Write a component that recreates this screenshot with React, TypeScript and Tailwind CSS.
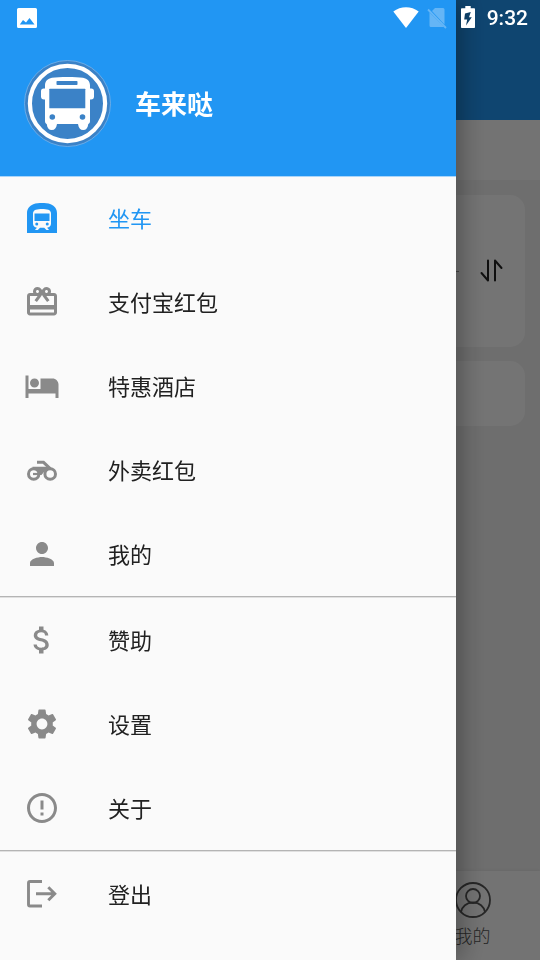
import { useState, type ReactNode } from "react";
import {
  MdAttachMoney,
  MdErrorOutline,
  MdHotel,
  MdPerson,
  MdRedeem,
  MdSettings,
  MdSubway,
} from "react-icons/md";

type Item = { id: string; label: string; icon: ReactNode };

const mainItems: Item[] = [
  { id: "ride", label: "坐车", icon: <MdSubway size={36} /> },
  { id: "alipay", label: "支付宝红包", icon: <MdRedeem size={36} /> },
  { id: "hotel", label: "特惠酒店", icon: <MdHotel size={36} /> },
  { id: "takeout", label: "外卖红包", icon: <MotorcycleIcon /> },
  { id: "me", label: "我的", icon: <MdPerson size={36} /> },
];

const moreItems: Item[] = [
  { id: "sponsor", label: "赞助", icon: <MdAttachMoney size={36} /> },
  { id: "settings", label: "设置", icon: <MdSettings size={36} /> },
  { id: "about", label: "关于", icon: <MdErrorOutline size={36} /> },
];

const logoutItem: Item = { id: "logout", label: "登出", icon: <LogoutIcon /> };

function MotorcycleIcon() {
  return (
    <svg width="36" height="36" viewBox="0 0 36 36" fill="none" stroke="currentColor" aria-hidden="true">
      <circle cx="9.7" cy="22" r="5.2" strokeWidth="3" />
      <circle cx="26.200" cy="22" r="5.300" strokeWidth="3" />
      <path strokeWidth="3" d="M13 10.300h6.500l7 6.500" />
      <path strokeWidth="2.200" d="M9 22h6" />
      <path fill="currentColor" stroke="none" d="M8.500 14.800h16l1.500 2-6 3.200-2.500 3h-2.700c-.3-4-2.800-5.500-6.300-5.500z" />
    </svg>
  );
}

function LogoutIcon() {
  return (
    <svg width="36" height="36" viewBox="0 0 36 36" fill="none" stroke="currentColor" strokeWidth="2.9" aria-hidden="true">
      <path d="M18 5.500H6a1.500 1.500 0 0 0-1.500 1.500v21.500a1.500 1.500 0 0 0 1.500 1.500H18M12 17.700h19M24.300 11.200l6.500 6.500-6.500 6.500" />
    </svg>
  );
}

function BusLogo() {
  return (
    <svg width="87" height="87" viewBox="0 0 87 87" className="shrink-0" aria-hidden="true">
      <circle cx="43.5" cy="43.5" r="43" fill="#3b82c7" stroke="#79b4ea" strokeWidth=".8" />
      <circle cx="43.5" cy="43.5" r="37.600" fill="none" stroke="#fff" strokeWidth="4.200" />
      <path
        fill="#fff"
        d="M28 17.800c7-1 24-1 31 0 4.500.8 6.800 3.500 7 7.500v3.200h1.200a2.800 2.800 0 0 1 2.800 2.800v5.200a3 3 0 0 1-3 3h-1V61c0 1.500-.6 2.500-1.800 3.200-.4 3.800-2 5.800-5 5.800s-4.500-2-5.200-6H33c-.7 4-2.200 6-5.200 6s-4.600-2-5-5.800c-1.200-.7-1.800-1.700-1.800-3.200V39.500h-1a3 3 0 0 1-3-3v-5.200a2.800 2.800 0 0 1 2.800-2.800H21v-3.200c.2-4 2.500-6.700 7-7.500z"
      />
      <rect x="32.500" y="21" width="21" height="4" rx=".8" fill="#3b82c7" />
      <rect x="25.300" y="28.800" width="36" height="19.500" rx=".5" fill="#3b82c7" />
      <circle cx="28.300" cy="57" r="2.800" fill="#3b82c7" />
      <circle cx="58.500" cy="57" r="2.800" fill="#3b82c7" />
    </svg>
  );
}

function StatusBar() {
  return (
    <div className="pointer-events-none fixed inset-x-0 top-0 z-30 flex h-9 items-center justify-between pr-3 pl-4 text-white">
      <svg width="22" height="22" viewBox="0 0 22 22" aria-hidden="true">
        <path
          fill="currentColor"
          fillRule="evenodd"
          d="M2.500 1h17A1.500 1.500 0 0 1 21 2.500v17a1.500 1.500 0 0 1-1.500 1.500h-17A1.500 1.500 0 0 1 1 19.500v-17A1.500 1.500 0 0 1 2.500 1zM3.800 17.500h14.700l-5-6.500-3.500 4.500-3-2.500z"
        />
      </svg>
      <div className="flex items-center">
        <svg width="26" height="22" viewBox="0 0 26 22" aria-hidden="true">
          <path fill="currentColor" d="M13 21L.3 4.500C7.500-1.300 18.500-1.300 25.700 4.500z" />
        </svg>
        <svg width="20" height="22" viewBox="0 0 20 22" className="ml-2 opacity-30" aria-hidden="true">
          <path fill="currentColor" d="M8 1h8a1.500 1.500 0 0 1 1.500 1.500v15L5 4zM2.500 5.500l14.500 14.500H4A1.500 1.500 0 0 1 2.500 18.500z" />
          <path stroke="currentColor" strokeWidth="1.800" d="M1 2.500L19 21" />
        </svg>
        <svg width="14" height="24" viewBox="0 0 14 24" className="ml-[14px]" aria-hidden="true">
          <path
            fill="currentColor"
            fillRule="evenodd"
            d="M4.300 0h5.400v2.200H13.200a.8.8 0 0 1 .8.8v18.200a.8.8 0 0 1-.8.8H.8a.8.8 0 0 1-.8-.8V3a.8.8 0 0 1 .8-.8h3.500zM9.800 6L4 7.500l-.8 6h3L5 19.500l5.800-8.200H8z"
          />
        </svg>
        <span className="ml-3 font-['Roboto',sans-serif] text-[21px] leading-6 font-medium">9:32</span>
      </div>
    </div>
  );
}

function DrawerItem({ item, active, onSelect }: { item: Item; active: boolean; onSelect: (id: string) => void }) {
  return (
    <button
      type="button"
      onClick={() => onSelect(item.id)}
      className={`flex h-[84px] w-full items-center gap-12 pl-6 text-left ${active ? "text-[#2196f3]" : "text-[#8a8a8a]"}`}
    >
      {item.icon}
      <span className={`pb-[2px] text-[22px] leading-8 ${active ? "" : "text-[#212121]"}`}>{item.label}</span>
    </button>
  );
}

function Divider() {
  return <hr className="h-[2px] border-t border-b border-t-[#b4b4b4] border-b-[#e0e0e0]" />;
}

function HomePage() {
  return (
    <div className="flex min-h-screen flex-col bg-[#f0f0f0]">
      <header className="h-[120px] bg-[#2196f3]" />
      <div className="h-[60px] bg-[#fafafa]" />
      <main className="flex grow flex-col gap-[14px] p-[15px]">
        <section className="flex h-[152px] items-center rounded-[15px] bg-[#fdfdfd] pr-[21px]">
          <div className="mr-[21px] h-px grow bg-[#999]" />
          <button type="button" aria-label="交换">
            <svg width="24" height="24" viewBox="0 0 24 24" fill="none" stroke="#222" strokeWidth="2" strokeLinecap="round" strokeLinejoin="round" aria-hidden="true">
              <path d="M8 1.500v20l-6.500-7.500M15 21.500v-20l6.500 7.500" />
            </svg>
          </button>
        </section>
        <section className="h-[65px] rounded-[15px] bg-[#fdfdfd]" />
      </main>
      <nav className="grid h-[89px] grid-cols-4 bg-[#fafafa] shadow-[0_-1px_3px_rgba(0,0,0,0.05)]">
        <a href="#me" className="col-start-4 flex flex-col items-center gap-1 pt-[10px] text-[#555]">
          <svg width="38" height="38" viewBox="0 0 38 38" fill="none" stroke="currentColor" strokeWidth="1.800" aria-hidden="true">
            <circle cx="19" cy="19" r="17" />
            <circle cx="19" cy="15" r="7" />
            <path d="M7 31c1-5.500 5.500-9.500 12-9.500s11 4 12 9.500" />
          </svg>
          <span className="text-[18px] leading-6 font-light">我的</span>
        </a>
      </nav>
    </div>
  );
}

export default function App() {
  const [selected, setSelected] = useState("ride");
  const [open, setOpen] = useState(true);

  return (
    <div className="font-['Noto_Sans_CJK_SC',sans-serif]">
      <HomePage />
      <StatusBar />

      {open && (
        <>
          <div className="fixed inset-0 z-10 bg-black/54" onClick={() => setOpen(false)} />
          <aside className="fixed inset-y-0 left-0 z-20 w-[456px] max-w-[85%] overflow-y-auto bg-[#fafafa] shadow-[6px_0_24px_rgba(0,0,0,0.3)]">
            <div className="flex h-[176px] items-center gap-6 bg-[#2196f3] pt-[30px] pl-6 shadow-[0_1px_0_#a9d5fa]">
              <BusLogo />
              <h1 className="text-[26px] leading-9 font-bold text-white">车来哒</h1>
            </div>
            {mainItems.map((item) => (
              <DrawerItem key={item.id} item={item} active={item.id === selected} onSelect={setSelected} />
            ))}
            <Divider />
            {moreItems.map((item) => (
              <DrawerItem key={item.id} item={item} active={item.id === selected} onSelect={setSelected} />
            ))}
            <Divider />
            <DrawerItem item={logoutItem} active={false} onSelect={setSelected} />
          </aside>
        </>
      )}
    </div>
  );
}
